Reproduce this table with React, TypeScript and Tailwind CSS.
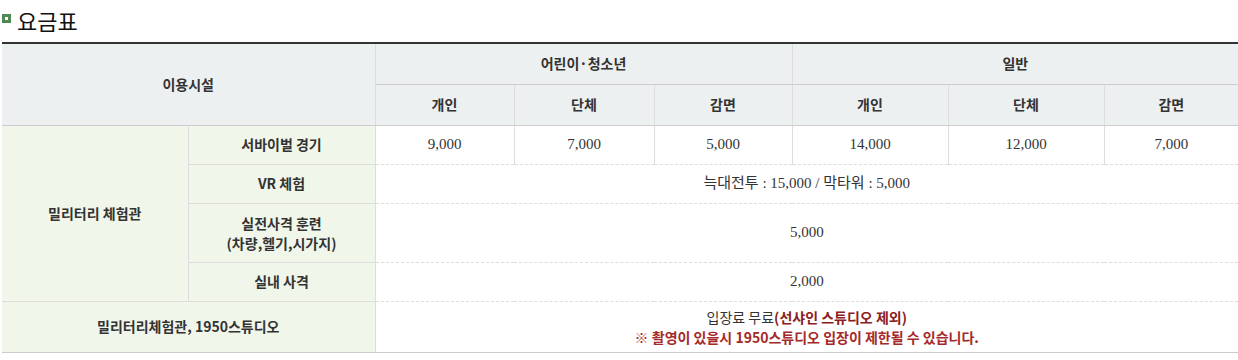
import React from 'react';

const kr = "font-['Noto_Sans_CJK_KR','Noto_Sans',sans-serif]";
const num = "font-['Liberation_Serif','Noto_Sans_CJK_KR',serif]";

const th = 'border border-[#dddddd] bg-[#edf0f1] text-center text-[14px] font-bold text-[#333]';
const green = 'border border-[#dddddd] bg-[#f1f6eb] text-center text-[14px] font-bold text-[#333]';
const td = `border-x border-b border-[#dddddd] [border-bottom-style:dashed] ${num} text-center text-[15px] text-[#333]`;

const PriceTable: React.FC = () => {
  return (
    <div className={`w-[1238px] bg-white pl-[2px] ${kr}`}>
      <div className="flex h-[42px] items-start pt-[5px]">
        <span className="mt-[9px] mr-[6px] h-[9px] w-[9px] border-[3px] border-[#4f8a55] bg-white" />
        <h2 className="text-[22px] leading-[30px] font-normal text-[#111]">요금표</h2>
      </div>
      <table className="w-[1236px] table-fixed border-collapse border-t-2 border-t-[#333]">
        <colgroup>
          <col className="w-[186px]" />
          <col className="w-[187px]" />
          <col className="w-[139px]" />
          <col className="w-[140px]" />
          <col className="w-[138px]" />
          <col className="w-[156px]" />
          <col className="w-[156px]" />
          <col className="w-[134px]" />
        </colgroup>
        <thead>
          <tr className="h-[41px]">
            <th colSpan={2} rowSpan={2} className={`${th} border-l-0 border-b-[#cccccc]`}>이용시설</th>
            <th colSpan={3} className={`${th} border-b-[#cccccc]`}>어린이·청소년</th>
            <th colSpan={3} className={`${th} border-r-0 border-b-[#cccccc]`}>일반</th>
          </tr>
          <tr className="h-[41px]">
            {['개인', '단체', '감면', '개인', '단체', '감면'].map((h, i) => (
              <th key={i} className={`${th} border-b-[#cccccc] ${i === 5 ? 'border-r-0' : ''}`}>{h}</th>
            ))}
          </tr>
        </thead>
        <tbody>
          <tr className="h-[39px]">
            <td rowSpan={4} className={`${green} border-l-0`}>밀리터리 체험관</td>
            <td className={green}>서바이벌 경기</td>
            {['9,000', '7,000', '5,000', '14,000', '12,000', '7,000'].map((v, i) => (
              <td key={i} className={`${td} ${i === 5 ? 'border-r-0' : ''}`}>{v}</td>
            ))}
          </tr>
          <tr className="h-[39px]">
            <td className={green}>VR 체험</td>
            <td colSpan={6} className={`${td} border-r-0`}>늑대전투 : 15,000 / 막타워 : 5,000</td>
          </tr>
          <tr className="h-[59px]">
            <td className={`${green} leading-[20px]`}>
              실전사격 훈련
              <br />
              (차량,헬기,시가지)
            </td>
            <td colSpan={6} className={`${td} border-r-0`}>5,000</td>
          </tr>
          <tr className="h-[39px]">
            <td className={green}>실내 사격</td>
            <td colSpan={6} className={`${td} border-r-0`}>2,000</td>
          </tr>
          <tr className="h-[51px]">
            <td colSpan={2} className={`${green} border-l-0 border-b-[#cccccc]`}>밀리터리체험관, 1950스튜디오</td>
            <td colSpan={6} className={`border-b border-b-[#cccccc] border-l border-l-[#dddddd] text-center text-[14px] leading-[20px] text-[#333] ${kr}`}>
              입장료 무료<b className="text-[#8b2020]">(선샤인 스튜디오 제외)</b>
              <br />
              <b className="text-[#a52a2a]">※ 촬영이 있을시 1950스튜디오 입장이 제한될 수 있습니다.</b>
            </td>
          </tr>
        </tbody>
      </table>
    </div>
  );
};

export default function App() {
  return <PriceTable />;
}
